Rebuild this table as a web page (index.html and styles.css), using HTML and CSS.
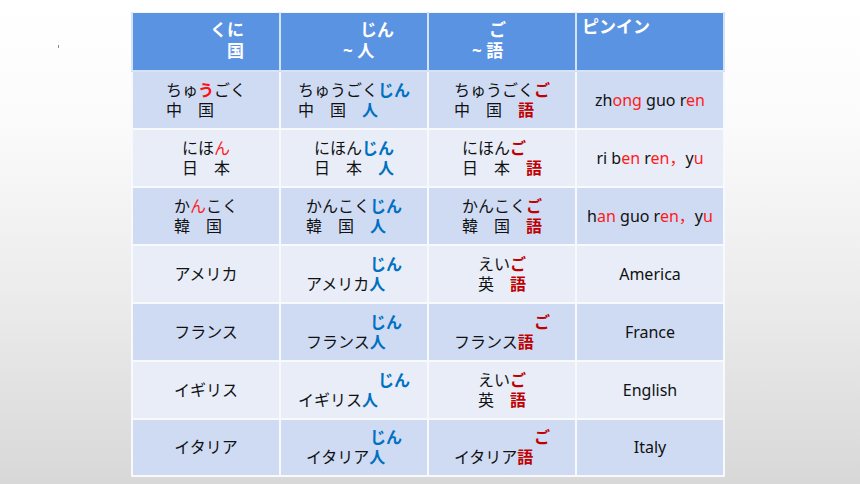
FILE: index.html
```html
<!DOCTYPE html>
<html lang="ja">
<head>
<meta charset="utf-8">
<link rel="stylesheet" href="styles.css">
</head>
<body>
<div class="slide">
  <span class="mark"></span>
  <table class="grid">
    <colgroup><col class="c"><col class="c"><col class="c"><col class="c"></colgroup>
    <tr class="head">
      <th class="h1">くに<br>　国</th>
      <th class="h2">　じん<br>~ 人</th>
      <th class="h3">　ご<br>~ 語</th>
      <th class="h4">ピンイン</th>
    </tr>
    <tr class="dark">
      <td><span class="blk">ちゅ<b class="r">う</b>ごく<br>中　国</span></td>
      <td><span class="blk">ちゅうごく<b class="j">じん</b><br>中　国　<b class="j">人</b></span></td>
      <td><span class="blk">ちゅうごく<b class="g">ご</b><br>中　国　<b class="g">語</b></span></td>
      <td>zh<span class="rr">ong</span> guo r<span class="rr">en</span></td>
    </tr>
    <tr class="light">
      <td><span class="blk">にほ<span class="rr">ん</span><br>日　本</span></td>
      <td><span class="blk">にほん<b class="j">じん</b><br>日　本　<b class="j">人</b></span></td>
      <td><span class="blk">にほん<b class="g">ご</b><br>日　本　<b class="g">語</b></span></td>
      <td>ri b<span class="rr">en</span> r<span class="rr">en，</span>y<span class="rr">u</span></td>
    </tr>
    <tr class="dark">
      <td><span class="blk">か<span class="rr">ん</span>こく<br>韓　国</span></td>
      <td><span class="blk">かんこく<b class="j">じん</b><br>韓　国　<b class="j">人</b></span></td>
      <td><span class="blk">かんこく<b class="g">ご</b><br>韓　国　<b class="g">語</b></span></td>
      <td>h<span class="rr">an</span> guo r<span class="rr">en，</span>y<span class="rr">u</span></td>
    </tr>
    <tr class="light">
      <td>アメリカ</td>
      <td><span class="blk">　　　　<b class="j">じん</b><br>アメリカ<b class="j">人</b></span></td>
      <td><span class="blk">えい<b class="g">ご</b><br>英　<b class="g">語</b></span></td>
      <td>America</td>
    </tr>
    <tr class="dark">
      <td>フランス</td>
      <td><span class="blk">　　　　<b class="j">じん</b><br>フランス<b class="j">人</b></span></td>
      <td><span class="blk">　　　　　<b class="g">ご</b><br>フランス<b class="g">語</b></span></td>
      <td>France</td>
    </tr>
    <tr class="light">
      <td>イギリス</td>
      <td><span class="blk">　　　　　<b class="j">じん</b><br>イギリス<b class="j">人</b></span></td>
      <td><span class="blk">えい<b class="g">ご</b><br>英　<b class="g">語</b></span></td>
      <td>English</td>
    </tr>
    <tr class="dark">
      <td>イタリア</td>
      <td><span class="blk">　　　　<b class="j">じん</b><br>イタリア<b class="j">人</b></span></td>
      <td><span class="blk">　　　　　<b class="g">ご</b><br>イタリア<b class="g">語</b></span></td>
      <td>Italy</td>
    </tr>
  </table>
</div>
</body>
</html>
```

FILE: styles.css
```css
html, body {
  margin: 0;
  padding: 0;
}
body {
  width: 860px;
  height: 484px;
  overflow: hidden;
}
.slide {
  position: relative;
  box-sizing: border-box;
  width: 860px;
  height: 484px;
  padding: 12px 0 0 131px;
  background: linear-gradient(to bottom, #ffffff 0%, #fbfbfb 25%, #ececec 60%, #d8d8d8 100%);
  font-family: "Noto Sans", "Noto Sans CJK JP", sans-serif;
  color: #111;
}
.mark {
  position: absolute;
  left: 58px;
  top: 45px;
  width: 1px;
  height: 3px;
  background: #888;
}
.grid {
  border-collapse: collapse;
  table-layout: fixed;
  width: 594px;
  border: 1px solid #f4f6fb;
}
.c {
  width: 148px;
}
.grid th, .grid td {
  height: 58px;
  padding: 0;
  box-sizing: border-box;
  border: 2px solid #f7f9fd;
}
.grid tr:last-child td {
  height: 57px;
}
.head th {
  background: #5b93e3;
  color: #fff;
  font-size: 17px;
  font-weight: bold;
  line-height: 21px;
  text-align: left;
  vertical-align: top;
  padding-top: 6px;
  border-color: #d6e3f7;
  border-top: none;
}
.head .h1 { padding-left: 77px; }
.head .h2 { padding-left: 62px; }
.head .h3 { padding-left: 43px; }
.head .h4 { padding-left: 5px; padding-top: 3px; }
.dark td { background: #cfdbf3; }
.light td { background: #e8edf8; }
.grid td {
  text-align: center;
  vertical-align: middle;
  font-size: 16px;
  line-height: 20px;
}
.blk {
  display: inline-block;
  text-align: left;
}
.r {
  color: #ff1010;
  font-weight: bold;
}
.rr {
  color: #ff1a1a;
}
.j {
  color: #0070c0;
  font-weight: bold;
}
.g {
  color: #c00000;
  font-weight: bold;
}
```
